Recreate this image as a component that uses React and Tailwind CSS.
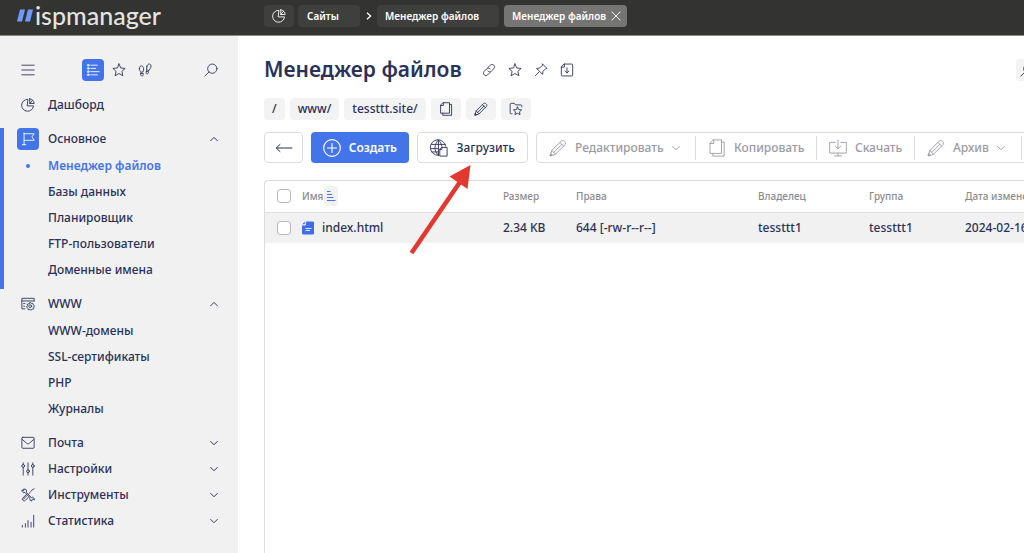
import React, { useState } from "react";
import clsx from "clsx";

// Thin outline icon, drawn on a 16px grid
const Icon = ({ children, className = "size-3.5", width = 1, box = 16 }) => (
  <svg
    viewBox={`0 0 ${box} ${box}`}
    className={clsx("shrink-0", className)}
    fill="none"
    stroke="currentColor"
    strokeWidth={width}
    strokeLinecap="round"
    strokeLinejoin="round"
    aria-hidden="true"
  >
    {children}
  </svg>
);

const PieIcon = (props) => (
  <Icon {...props}>
    <path d="M7.5 1.5A6.8 6.8 0 1 0 14.3 9H7.5z" />
    <path d="M10 1v5.3h5A5.2 5.2 0 0 0 10 1z" />
    <path d="M10 6.300 13.200 2.600" />
  </Icon>
);

const StarIcon = (props) => (
  <Icon {...props}>
    <path d="M8 1l2 4.700 5 .5-3.700 3.400 1.100 5L8 12l-4.400 2.600 1.100-5L1 6.200l5-.5z" />
  </Icon>
);

const SearchIcon = (props) => (
  <Icon {...props}>
    <circle cx="9.500" cy="6.500" r="5.300" />
    <path d="M5.700 10.300 1 15" />
  </Icon>
);

const MenuIcon = (props) => (
  <Icon {...props}>
    <path d="M1 2.500h14M1 8h14M1 13.500h14" />
  </Icon>
);

const ListIcon = (props) => (
  <Icon {...props}>
    <circle cx="2.500" cy="2.500" r="1" />
    <circle cx="2.500" cy="6.200" r="1" />
    <circle cx="2.500" cy="9.900" r="1" />
    <circle cx="2.500" cy="13.500" r="1" />
    <path d="M5.500 2.500H13M5.500 6.200h5.500M5.500 9.900H15M5.500 13.500H13" />
  </Icon>
);

const StepsIcon = (props) => (
  <Icon {...props}>
    <path d="M1.500 6.500c0-2 1-3.200 2.400-3.200s2.500 1.300 2.500 3.200c0 1.500-.5 2.300-.6 3.700L3 10.700c-.2-1.500-1.500-2.500-1.500-4.200z" />
    <path d="M3 12.200l2.900-.5c.3 1.800 0 3-1.100 3.200S3.100 14 3 12.200z" />
    <path d="M10.200 3.700C10.700 2 11.800.900 13.200 1.200s2 1.700 1.600 3.500c-.4 1.600-1.900 2.400-2.200 3.900L9.900 7.900c.2-1.500-.1-2.600.3-4.200z" />
    <path d="M9.600 9.300l2.700.7c-.4 1.800-1.200 2.800-2.200 2.500s-1-1.500-.5-3.200z" />
  </Icon>
);

const FlagIcon = (props) => (
  <Icon {...props}>
    <path d="M3.500 1v13.500M1.500 14.500h4M3.500 2H15l-2.500 3.500L15 9.500H3.500" />
  </Icon>
);

const BrowserGearIcon = (props) => (
  <Icon {...props}>
    <path d="M15 4.500V1.500H1v12h3.500M1 4.500h14M3 7.500h1.500M3 10.500h1" />
    <circle cx="10.500" cy="10.500" r="1.600" />
    <path d="M10.500 6.200l1.300 1.200 1.700-.2.500 1.700 1.400 1.100-.9 1.500.1 1.800-1.800.5-1.100 1.300-1.600-.8-1.800.3-.5-1.700L6.400 11.500l.8-1.600.2-1.800 1.800-.4z" />
  </Icon>
);

const MailIcon = (props) => (
  <Icon {...props}>
    <rect x="1" y="1.500" width="14" height="12.500" rx="1" />
    <path d="M1.500 4l5 4.300c1 .8 2 .8 3 0l5-4.300" />
  </Icon>
);

const SlidersIcon = (props) => (
  <Icon {...props}>
    <circle cx="2.500" cy="4.500" r="1.600" />
    <circle cx="8" cy="10.500" r="1.600" />
    <circle cx="13.500" cy="4.500" r="1.600" />
    <path d="M2.500 1v1.900M2.500 6.100V15M8 1v7.900M8 12.100V15M13.500 1v1.900M13.500 6.100V15" />
  </Icon>
);

const ToolsIcon = (props) => (
  <Icon {...props}>
    <path d="M3.500 1.200l2 .3 1 2-.6 1.400 6 6 1.500-.4 1.600 1.300.2 1.800-1.600-1-1.200.8v1.500l-1.800-.8-.6-1.900.3-1.200-5.900-5.900-1.600.4L1.300 4l-.2-1.800 1.700 1z" />
    <path d="M15 1l-2.200.9-.8 1.500-3.300 3.300M7 8.500l-4.500 4.500M9 10l-4.200 4.200c-1.800 1.500-4.300-.9-2.800-2.600L6 7.500" />
  </Icon>
);

const ChartIcon = (props) => (
  <Icon {...props}>
    <path d="M1.500 15v-2M5 15v-4M8 15V7.500M11.500 15V9.500M14.500 15V1.500" />
  </Icon>
);

const ChevronIcon = ({ up, className = "size-2" }) => (
  <Icon box={10} width={1.2} className={className}>
    <path d={up ? "M.8 7.200 5 3l4.200 4.200" : "M.8 3 5 7.200 9.200 3"} />
  </Icon>
);

const LinkIcon = (props) => (
  <Icon {...props}>
    <path d="M6.500 5.500l3-3c2.800-2.500 6.500 1.200 4 4l-2.700 2.700c-1.300 1.200-3 1.100-4.100 0" />
    <path d="M9.500 10.500l-3 3c-2.800 2.500-6.500-1.200-4-4l2.700-2.700c1.300-1.200 3-1.100 4.100 0" />
  </Icon>
);

const PinIcon = (props) => (
  <Icon {...props}>
    <path d="M9.800 1.200l5 5-1.500.3-3 3-.5 3.500-6.800-6.800 3.500-.5 3-3zM5.800 10.200 1.500 14.500" />
  </Icon>
);

const ImportIcon = (props) => (
  <Icon {...props}>
    <path d="M5 1.200h8.500a1 1 0 0 1 1 1v11.600a1 1 0 0 1-1 1h-11a1 1 0 0 1-1-1V4.700zM5 1.200v3.500H1.500M8 5.500v5.800M5.800 9.200 8 11.400l2.200-2.200" />
  </Icon>
);

const PagesIcon = (props) => (
  <Icon {...props}>
    <path d="M5 .8h7v12H1.800V4zM5 .8V4H1.800M12 2.800h2.400v12.400H4.300v-2.400" />
  </Icon>
);

const PencilIcon = (props) => (
  <Icon {...props}>
    <path d="M1.200 14.800l1.300-4.600 8.600-8.600c1.500-1.300 4.700 1.700 3.300 3.300l-8.600 8.600zM2.500 10.200l3.300 3.300M9.700 3l3.300 3.300M4.300 11.800l7.200-7.200M1.200 14.800l1.800-.5-1.300-1.300z" />
  </Icon>
);

const FolderStarIcon = (props) => (
  <Icon {...props}>
    <path d="M3.500 13.500h-1a1.200 1.200 0 0 1-1.200-1.200V2.700c0-.7.5-1.200 1.200-1.200H6l1.500 1.800h6c.7 0 1.200.5 1.200 1.200v1" />
    <path d="M9.700 5.700l1.400 2.900 3.300.4-2.400 2.200.6 3.200-2.900-1.500-2.900 1.500.6-3.200L5 9l3.300-.4z" />
  </Icon>
);

const PlusCircleIcon = (props) => (
  <Icon {...props}>
    <circle cx="8" cy="8" r="7.400" />
    <path d="M8 4v8M4 8h8" />
  </Icon>
);

const GlobePageIcon = (props) => (
  <Icon {...props}>
    <path d="M7.500 14.500A6.900 6.900 0 1 1 14 6.500M7.500 1c-4.200 4-4.200 9.500 0 13.500M7.500 1c1.800 1.700 2.800 3.600 3.100 5.500M7.500 1v13.500M1.300 4.800h12.200M.8 8.500h6.500M1.700 11.500h5.800" />
    <path d="M10.500 7.500h4.700v7.700H8.700V9.300zM10.500 7.500v1.800H8.700" />
  </Icon>
);

const MonitorDownIcon = (props) => (
  <Icon {...props}>
    <path d="M5.500 3H.600v9.500h14.800V3h-4.900M8 1v7.500M5.500 6.300 8 8.700l2.500-2.400M8 12.500V15M5 15h6" />
  </Icon>
);

const ArrowLeftIcon = () => (
  <svg viewBox="0 0 18 10" className="h-2.5 w-[18px]" fill="none" stroke="currentColor" strokeLinecap="round" aria-hidden="true">
    <path d="M17 5H1.500M5 1.500 1.200 5 5 8.500" />
  </svg>
);

const FileIcon = () => (
  <svg viewBox="0 0 12 14" className="h-3.5 w-3 shrink-0" aria-hidden="true">
    <path d="M4 .5h7a1 1 0 0 1 1 1v11a1 1 0 0 1-1 1H1a1 1 0 0 1-1-1V4.500h3a1 1 0 0 0 1-1z" fill="#3f6fe8" />
    <path d="M.3 3.200 2.800.6v2.600z" fill="#3f6fe8" />
    <path d="M3.500 7.500h6M3.500 9.500H8" stroke="#dfe8ff" strokeWidth="1" />
  </svg>
);

const menu = [
  {
    title: "Основное",
    icon: FlagIcon,
    active: true,
    items: ["Менеджер файлов", "Базы данных", "Планировщик", "FTP-пользователи", "Доменные имена"],
  },
  {
    title: "WWW",
    icon: BrowserGearIcon,
    items: ["WWW-домены", "SSL-сертификаты", "PHP", "Журналы"],
  },
  { title: "Почта", icon: MailIcon },
  { title: "Настройки", icon: SlidersIcon },
  { title: "Инструменты", icon: ToolsIcon },
  { title: "Статистика", icon: ChartIcon },
];

const actions = [
  { label: "Редактировать", icon: PencilIcon, more: true, width: "w-[159px]" },
  { label: "Копировать", icon: PagesIcon, width: "w-[121px]" },
  { label: "Скачать", icon: MonitorDownIcon, width: "w-[98px]" },
  { label: "Архив", icon: PencilIcon, more: true, width: "w-[107px]" },
];

const files = [
  { name: "index.html", size: "2.34 KB", rights: "644 [-rw-r--r--]", owner: "tessttt1", group: "tessttt1", date: "2024-02-16" },
];

const Header = () => (
  <header className="flex h-9 items-start border-b border-[#8a8a88] bg-[#333432] text-[10px] font-semibold text-white">
    <a href="#home" className="flex h-[30px] w-[264px] shrink-0 items-center pl-[17px] text-[#e4e4e2]">
      <svg viewBox="0 0 16 13" className="h-[13px] w-4 shrink-0" fill="#6f9bff" aria-hidden="true">
        <path d="M3 .5h5L5 12.500H0zM11 .5h5L13 12.500H8z" />
      </svg>
      <span className="ml-0.5 font-['Lato'] text-[25px] leading-[28px] font-medium">ispmanager</span>
    </a>
    <nav className="mt-[5px] flex h-[22px] items-center whitespace-nowrap">
      <button aria-label="Дашборд" className="flex h-full w-[30px] items-center justify-center rounded bg-[#3f403e]">
        <PieIcon />
      </button>
      <button className="ml-1 h-full w-[62px] rounded bg-[#3f403e] pl-[9px] text-left">Сайты</button>
      <span className="flex w-[17px] justify-center">
        <svg viewBox="0 0 6 8" className="h-2 w-1.5" fill="none" stroke="currentColor" strokeWidth="1.300" aria-hidden="true">
          <path d="M1 .8 4.600 4 1 7.200" />
        </svg>
      </span>
      <button className="h-full w-[122px] rounded bg-[#3f403e] pl-2 text-left">Менеджер файлов</button>
      <button className="ml-[5px] flex h-full w-[123px] items-center justify-between rounded bg-[#757674] pr-1.5 pl-2">
        Менеджер файлов
        <Icon className="size-2.5" width={1.5}>
          <path d="M1.500 1.500l13 13M14.500 1.500l-13 13" />
        </Icon>
      </button>
    </nav>
  </header>
);

const MenuGroup = ({ group }) => {
  const [open, setOpen] = useState(!!group.items);
  const GroupIcon = group.icon;

  return (
    <li className={clsx("border-l-4", group.active ? "border-[#4474ea]" : "border-transparent")}>
      <button onClick={() => setOpen(!open)} className="flex h-[22px] w-full items-center pr-5 pl-[13px]">
        <span
          className={clsx(
            "flex size-[22px] items-center justify-center rounded",
            group.active && "bg-[#4474ea] text-white"
          )}
        >
          <GroupIcon />
        </span>
        <span className="ml-[9px] flex-1 text-left">{group.title}</span>
        <ChevronIcon up={open} />
      </button>
      {group.items && open && (
        <ul className="mt-[3px] pb-1.5">
          {group.items.map((item, i) => {
            const current = group.active && i === 0;
            return (
              <li key={item} className="flex h-[26px] items-center pl-[13px]">
                <span className="flex w-[31px] pl-[9px]">
                  {current && <span className="size-1 rounded-full bg-[#4474ea]" />}
                </span>
                <a href="#item" className={clsx(current && "font-semibold text-[#4474ea]")}>
                  {item}
                </a>
              </li>
            );
          })}
        </ul>
      )}
    </li>
  );
};

const Sidebar = () => (
  <aside className="w-[238px] shrink-0 bg-[#f1f1f1] text-xs font-medium">
    <div className="mt-[23px] flex h-[22px] items-center pr-5 pl-[21px]">
      <button aria-label="Меню">
        <MenuIcon />
      </button>
      <button aria-label="Список" className="ml-[47px] flex size-[22px] items-center justify-center rounded bg-[#4474ea] text-white">
        <ListIcon />
      </button>
      <button aria-label="Избранное" className="ml-2">
        <StarIcon />
      </button>
      <button aria-label="История" className="ml-3">
        <StepsIcon />
      </button>
      <button aria-label="Поиск" className="ml-auto">
        <SearchIcon />
      </button>
    </div>
    <a href="#dashboard" className="mt-[13px] flex h-[22px] items-center pl-[21px]">
      <PieIcon />
      <span className="ml-[13px]">Дашборд</span>
    </a>
    <ul className="mt-3 space-y-1">
      {menu.map((group) => (
        <MenuGroup key={group.title} group={group} />
      ))}
    </ul>
  </aside>
);

const PathBar = () => (
  <div className="mt-3.5 flex h-[22px] gap-[5px] text-xs font-medium">
    {["/", "www/", "tessttt.site/"].map((part) => (
      <button key={part} className="rounded bg-[#f3f3f3] px-2">
        {part}
      </button>
    ))}
    {[
      ["Копировать путь", PagesIcon],
      ["Изменить путь", PencilIcon],
      ["Избранные папки", FolderStarIcon],
    ].map(([label, PathIcon]) => (
      <button key={label} aria-label={label} className="flex w-[30px] items-center justify-center rounded bg-[#f3f3f3]">
        <PathIcon />
      </button>
    ))}
  </div>
);

const Toolbar = () => (
  <div className="mt-3 flex h-[31px] gap-2 text-xs font-medium">
    <button aria-label="Назад" className="flex w-[39px] items-center justify-center rounded border border-[#dcdde2]">
      <ArrowLeftIcon />
    </button>
    <button className="flex w-[98px] items-center justify-between rounded bg-[#4474ea] px-3 font-semibold text-white">
      <PlusCircleIcon className="size-[18px]" />
      Создать
    </button>
    <button className="flex w-[111px] items-center justify-between rounded border border-[#dcdde2] px-3">
      <GlobePageIcon className="size-[18px]" width={0.8} />
      Загрузить
    </button>
    <div className="flex flex-1 items-center rounded border border-[#dcdde2] text-[#9a9ba5]">
      {actions.map(({ label, icon: ActionIcon, more, width }) => (
        <button
          key={label}
          className={clsx("flex h-6 shrink-0 items-center border-r border-[#dcdde2] pl-3", width)}
        >
          <ActionIcon className="size-[18px]" width={0.8} />
          <span className="ml-2">{label}</span>
          {more && <ChevronIcon className="ml-2 size-2" />}
        </button>
      ))}
    </div>
  </div>
);

const FileTable = () => (
  <div className="mt-[17px] flex-1 rounded-tl border-t border-l border-[#dcdcdc]">
    <table className="w-full table-fixed text-left whitespace-nowrap">
      <thead>
        <tr className="h-[31px] border-b border-[#dcdcdc] text-[10px] text-[#8b8b8f]">
          <th className="w-[37px] pl-3">
            <input type="checkbox" aria-label="Выбрать все" className="block size-3.5 appearance-none rounded-[3px] border border-[#b9b9b9] bg-white" />
          </th>
          <th className="w-[201px] font-medium">
            <span className="flex items-center">
              Имя
              <span className="ml-px flex h-5 w-3.5 items-center justify-center rounded bg-[#f1f1f1]">
                <svg viewBox="0 0 10 10" className="size-2.5" stroke="#4474ea" aria-hidden="true">
                  <path d="M1 .5h3.500M1 3.500h5M1 6.500h6.500M1 9.500h8.500" />
                </svg>
              </span>
            </span>
          </th>
          <th className="w-[73px] font-medium">Размер</th>
          <th className="w-[182px] font-medium">Права</th>
          <th className="w-[111px] font-medium">Владелец</th>
          <th className="w-24 font-medium">Группа</th>
          <th className="font-medium">Дата изменения</th>
        </tr>
      </thead>
      <tbody>
        {files.map((file) => (
          <tr key={file.name} className="h-[31px] bg-[#f1f1f1] text-xs font-medium">
            <td className="pl-3">
              <input type="checkbox" aria-label={file.name} className="block size-3.5 appearance-none rounded-[3px] border border-[#b9b9b9] bg-white" />
            </td>
            <td>
              <a href="#file" className="flex items-center gap-2">
                <FileIcon />
                {file.name}
              </a>
            </td>
            <td>{file.size}</td>
            <td>{file.rights}</td>
            <td>{file.owner}</td>
            <td>{file.group}</td>
            <td>{file.date}</td>
          </tr>
        ))}
      </tbody>
    </table>
  </div>
);

const App = () => {
  return (
    <div className="flex min-h-screen flex-col overflow-hidden bg-white font-['Noto_Sans','Open_Sans',sans-serif] text-[#2b3158]">
      <Header />
      <div className="flex flex-1">
        <Sidebar />
        <main className="relative flex min-w-0 flex-1 flex-col pl-[26px]">
          <div className="flex min-w-[782px] flex-1 flex-col">
            <div className="mt-5 flex h-7 items-center">
              <h1 className="text-[21px] font-semibold">Менеджер файлов</h1>
              <div className="ml-5 flex gap-3">
                <button aria-label="Ссылка"><LinkIcon /></button>
                <button aria-label="В избранное"><StarIcon /></button>
                <button aria-label="Закрепить"><PinIcon /></button>
                <button aria-label="Экспорт"><ImportIcon /></button>
              </div>
              <button aria-label="Найти" className="ml-auto flex h-[22px] w-[30px] items-center rounded bg-[#f3f3f3] pl-1">
                <SearchIcon />
              </button>
            </div>
            <PathBar />
            <Toolbar />
            <FileTable />
          </div>
          {/* arrow pointing at the upload button */}
          <svg viewBox="0 0 64 92" className="pointer-events-none absolute top-[128px] left-[171px] h-[92px] w-16" aria-hidden="true">
            <path d="M2.500 89 51 18" stroke="#e2382f" strokeWidth="4.500" />
            <path d="M61.500 1 40.500 12.500 58.500 25z" fill="#e2382f" />
          </svg>
        </main>
      </div>
    </div>
  );
};

export default App;
